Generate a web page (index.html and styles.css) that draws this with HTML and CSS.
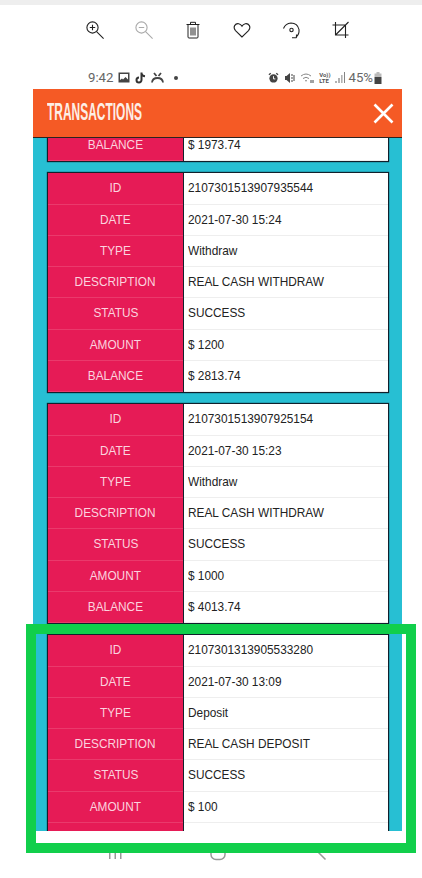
FILE: index.html
```html
<!DOCTYPE html>
<html lang="en">
<head>
<title>Transactions</title>
<meta charset="utf-8">
<link rel="stylesheet" href="styles.css">
</head>
<body>

<div class="topband"></div>

<!-- image viewer toolbar -->
<div class="toolbar">
	<span class="tool"><svg width="26" height="26" viewBox="0 0 26 26" fill="none" stroke="#222" stroke-width="1.1"><circle cx="10.5" cy="10.5" r="5.6"/><path d="M10.5 7.8v5.4M7.8 10.5h5.4M14.6 14.6l7 7"/></svg></span>
	<span class="tool"><svg width="26" height="26" viewBox="0 0 26 26" fill="none" stroke="#aaa" stroke-width="1.1"><circle cx="10.5" cy="10.5" r="5.6"/><path d="M7.8 10.5h5.4M14.6 14.6l7 7"/></svg></span>
	<span class="tool"><svg width="26" height="26" viewBox="0 0 26 26" fill="none" stroke="#222" stroke-width="1"><path d="M6.5 7.5h13M10.500 7.500V5.300h5v2.200M8 7.500V20q0 1 1 1h8q1 0 1-1V7.500M11 10.500v8M13 10.500v8M15 10.500v8"/></svg></span>
	<span class="tool"><svg width="26" height="26" viewBox="0 0 26 26" fill="none" stroke="#222" stroke-width="1.1"><path d="M13 20 6.500 13.600q-2.200-2.600-.9-5 1.500-2.400 4.100-1.900 2.100.4 3.300 2.400 1.200-2 3.300-2.400 2.600-.5 4.100 1.900 1.300 2.400-.9 5z"/></svg></span>
	<span class="tool"><svg width="26" height="26" viewBox="0 0 26 26" fill="none" stroke="#222" stroke-width="1.1"><path d="M5.500 11.500q2-5 7.500-5.500 6.500 0 8 6.500.5 5-3 7.500M14 20.800h4.500M18.500 17.500v3.300"/><circle cx="13.500" cy="13" r="1.700"/></svg></span>
	<span class="tool"><svg width="26" height="26" viewBox="0 0 26 26" fill="none" stroke="#222" stroke-width="1.1"><path d="M8.500 5v13h13M5.500 8h13v13M8.500 18l13-13"/></svg></span>
</div>

<!-- phone status bar -->
<div class="statusbar">
	<div class="status-left">
		<span>9:42</span>
		<svg width="12" height="11" viewBox="0 0 12 11"><path fill="#444" d="M.5.5h11v10H.5z"/><path fill="#fff" d="M2 2h8v5.500L7.500 5 5 7.500 4 6.500 2 8z"/></svg>
		<svg width="11" height="12" viewBox="0 0 11 12" fill="none" stroke="#333" stroke-width="2"><path d="M6.500.5v7.500a2.500 2.500 0 1 1-2.500-2.500M6.500 1.500q.8 2.500 3.500 2.800"/></svg>
		<svg width="13" height="12" viewBox="0 0 13 12" fill="none" stroke="#444" stroke-width="1.800"><path d="M3 1l2.500 3M10 1 7.500 4M1 10.500Q1.500 6 6.500 6t5.500 4.500"/></svg>
		<span class="dot"></span>
	</div>
	<div class="status-right">
		<svg class="alarm" width="11" height="12" viewBox="0 0 12 12"><circle cx="6" cy="6.500" r="4.500" fill="#444"/><path d="M1 2.500 3 .8M11 2.500 9 .8" stroke="#444" stroke-width="1.400"/><path d="M6 4v3h2" stroke="#fff" fill="none"/></svg>
		<svg class="mute" width="10" height="12" viewBox="0 0 10 12" fill="#444"><path d="M0 4h1.500L5 1v10L1.500 8H0z"/><path d="M6.500 2h1v2h-1zM6.500 5h1v2h-1zM6.500 8h1v2h-1zM8.500 3h1v6h-1z"/></svg>
		<svg class="wifi" width="15" height="12" viewBox="0 0 15 12" fill="none" stroke="#888"><path d="M1 4q5-4 10 0M3 6.500q3-2.500 6 0M5 9q1-1 2 0"/><path stroke="#444" d="M11 8v3M13 8v3"/></svg>
		<span class="volte">Vo))<br>LTE</span>
		<svg class="signal" width="10" height="11" viewBox="0 0 10 11" fill="#666"><path d="M.5 9h1v2h-1zM3.500 6h1v5h-1zM6.500 3h.8v8h-.8zM9 0h.8v11H9z"/></svg>
		<span>45%</span>
		<svg class="battery" width="8" height="12" viewBox="0 0 7 12"><path fill="#bbb" d="M2 0h3v1.500h2V5H0V1.500h2z"/><path fill="#444" d="M0 5h7v7H0z"/></svg>
	</div>
</div>

<div class="modal">
	<div class="modal-head">
		<h1>TRANSACTIONS</h1>
		<svg width="21" height="21" viewBox="0 0 21 21" stroke="#fff" stroke-width="2.600"><path d="M1.500 1.500l18 18M19.500 1.500l-18 18"/></svg>
	</div>
	<div class="modal-body">
		<div class="cards">
			<div class="card">
				<div class="row"><div class="key"><span>BALANCE</span></div><div class="val"><span>$ 1973.74</span></div></div>
			</div>
			<div class="card">
				<div class="row"><div class="key"><span>ID</span></div><div class="val"><span>2107301513907935544</span></div></div>
				<div class="row"><div class="key"><span>DATE</span></div><div class="val"><span>2021-07-30 15:24</span></div></div>
				<div class="row"><div class="key"><span>TYPE</span></div><div class="val"><span>Withdraw</span></div></div>
				<div class="row"><div class="key"><span>DESCRIPTION</span></div><div class="val"><span>REAL CASH WITHDRAW</span></div></div>
				<div class="row"><div class="key"><span>STATUS</span></div><div class="val"><span>SUCCESS</span></div></div>
				<div class="row"><div class="key"><span>AMOUNT</span></div><div class="val"><span>$ 1200</span></div></div>
				<div class="row"><div class="key"><span>BALANCE</span></div><div class="val"><span>$ 2813.74</span></div></div>
			</div>
			<div class="card">
				<div class="row"><div class="key"><span>ID</span></div><div class="val"><span>2107301513907925154</span></div></div>
				<div class="row"><div class="key"><span>DATE</span></div><div class="val"><span>2021-07-30 15:23</span></div></div>
				<div class="row"><div class="key"><span>TYPE</span></div><div class="val"><span>Withdraw</span></div></div>
				<div class="row"><div class="key"><span>DESCRIPTION</span></div><div class="val"><span>REAL CASH WITHDRAW</span></div></div>
				<div class="row"><div class="key"><span>STATUS</span></div><div class="val"><span>SUCCESS</span></div></div>
				<div class="row"><div class="key"><span>AMOUNT</span></div><div class="val"><span>$ 1000</span></div></div>
				<div class="row"><div class="key"><span>BALANCE</span></div><div class="val"><span>$ 4013.74</span></div></div>
			</div>
			<div class="card">
				<div class="row"><div class="key"><span>ID</span></div><div class="val"><span>2107301313905533280</span></div></div>
				<div class="row"><div class="key"><span>DATE</span></div><div class="val"><span>2021-07-30 13:09</span></div></div>
				<div class="row"><div class="key"><span>TYPE</span></div><div class="val"><span>Deposit</span></div></div>
				<div class="row"><div class="key"><span>DESCRIPTION</span></div><div class="val"><span>REAL CASH DEPOSIT</span></div></div>
				<div class="row"><div class="key"><span>STATUS</span></div><div class="val"><span>SUCCESS</span></div></div>
				<div class="row"><div class="key"><span>AMOUNT</span></div><div class="val"><span>$ 100</span></div></div>
				<div class="row"><div class="key"></div><div class="val"></div></div>
			</div>
		</div>
	</div>
</div>

<!-- android nav, mostly hidden by the green marker -->
<div class="navbar">
	<span class="nav-item"><svg width="16" height="30" viewBox="0 0 16 30" fill="#999"><path d="M2 15h1.500v13H2zM7.500 15H9v13H7.500zM13 15h1.500v13H13z"/></svg></span>
	<span class="nav-item"><svg width="18" height="30" viewBox="0 0 18 30" fill="none" stroke="#999" stroke-width="1.500"><rect x="2" y="14" width="14" height="14.500" rx="5"/></svg></span>
	<span class="nav-item"><svg width="14" height="30" viewBox="0 0 14 30" fill="none" stroke="#999" stroke-width="1.500"><path d="M10 14l-7 7 7.500 7.500"/></svg></span>
</div>

<div class="marker"></div>

</body>
</html>
```

FILE: styles.css
```css
html { background: #fff; }

body {
	position: relative;
	width: 422px;
	height: 878px;
	margin: 0;
	overflow: hidden;
	background: #fff;
	font-family: "Liberation Sans", Arial, sans-serif;
	color: #222;
}

.topband { height: 5px; background: #eee; }

.toolbar {
	display: flex;
	height: 57px;
	padding: 12px 0 0 70px;
	box-sizing: border-box;
}
.tool { width: 49px; height: 26px; text-align: center; }
.tool svg { display: block; margin: 0 auto; }

.statusbar {
	display: flex;
	justify-content: space-between;
	align-items: center;
	height: 27px;
	padding: 4px 40px 0 88px;
	box-sizing: border-box;
	font-family: Roboto, sans-serif;
	font-size: 13.2px;
	color: #666;
}
.status-left, .status-right { display: flex; align-items: center; gap: 5px; }
.status-right { gap: 4px; }
.dot { width: 4px; height: 4px; margin-left: 5px; border-radius: 50%; background: #444; }
.alarm { margin-right: 2px; }
.mute { margin-right: 1px; }
.volte { font-size: 6px; line-height: 6px; font-weight: bold; color: #555; }
.battery { margin-left: -3px; }

.modal { width: 369px; margin-left: 33px; }

.modal-head {
	display: flex;
	justify-content: space-between;
	align-items: center;
	height: 49px;
	padding: 0 8px 0 14px;
	box-sizing: border-box;
	background: #f55a25;
	border-bottom: 1px solid #2b2320;
}
.modal-head h1 {
	margin: 0 0 2px;
	font-size: 23px;
	font-weight: bold;
	color: #fdeee6;
	transform: scaleX(0.52);
	transform-origin: left center;
}

.modal-body {
	height: 693px;
	padding: 0 13px 0 14px;
	box-sizing: border-box;
	overflow: hidden;
	background: #27bfd3;
}

.cards { display: flex; flex-direction: column; gap: 10px; margin-top: -9px; }

.card { border: 1px solid #10202c; box-shadow: 0 0 1px #10202c; background: #fff; }

.row { display: flex; height: 31.29px; font-size: 12.6px; line-height: 30px; }
.row span { display: inline-block; transform: scaleX(0.94); }

.key {
	width: 135px;
	background: #e61b56;
	border-right: 1px solid #14202c;
	color: #fbd3df;
	text-align: center;
	box-shadow: inset 0 -1px 0 #ea3a6c;
}
.val {
	flex: 1;
	padding-left: 4px;
	color: #222;
	box-shadow: inset 0 -1px 0 #eee;
}
.val span { transform-origin: left center; }

.navbar { display: flex; padding-left: 63px; height: 47px; }
.nav-item { width: 103.5px; display: flex; justify-content: center; }
.nav-item svg { display: block; }

/* green highlight somebody drew over the screenshot */
.marker {
	position: absolute;
	left: 26px;
	top: 624px;
	width: 370px;
	height: 209px;
	border: 10px solid #11cf4b;
}
```
